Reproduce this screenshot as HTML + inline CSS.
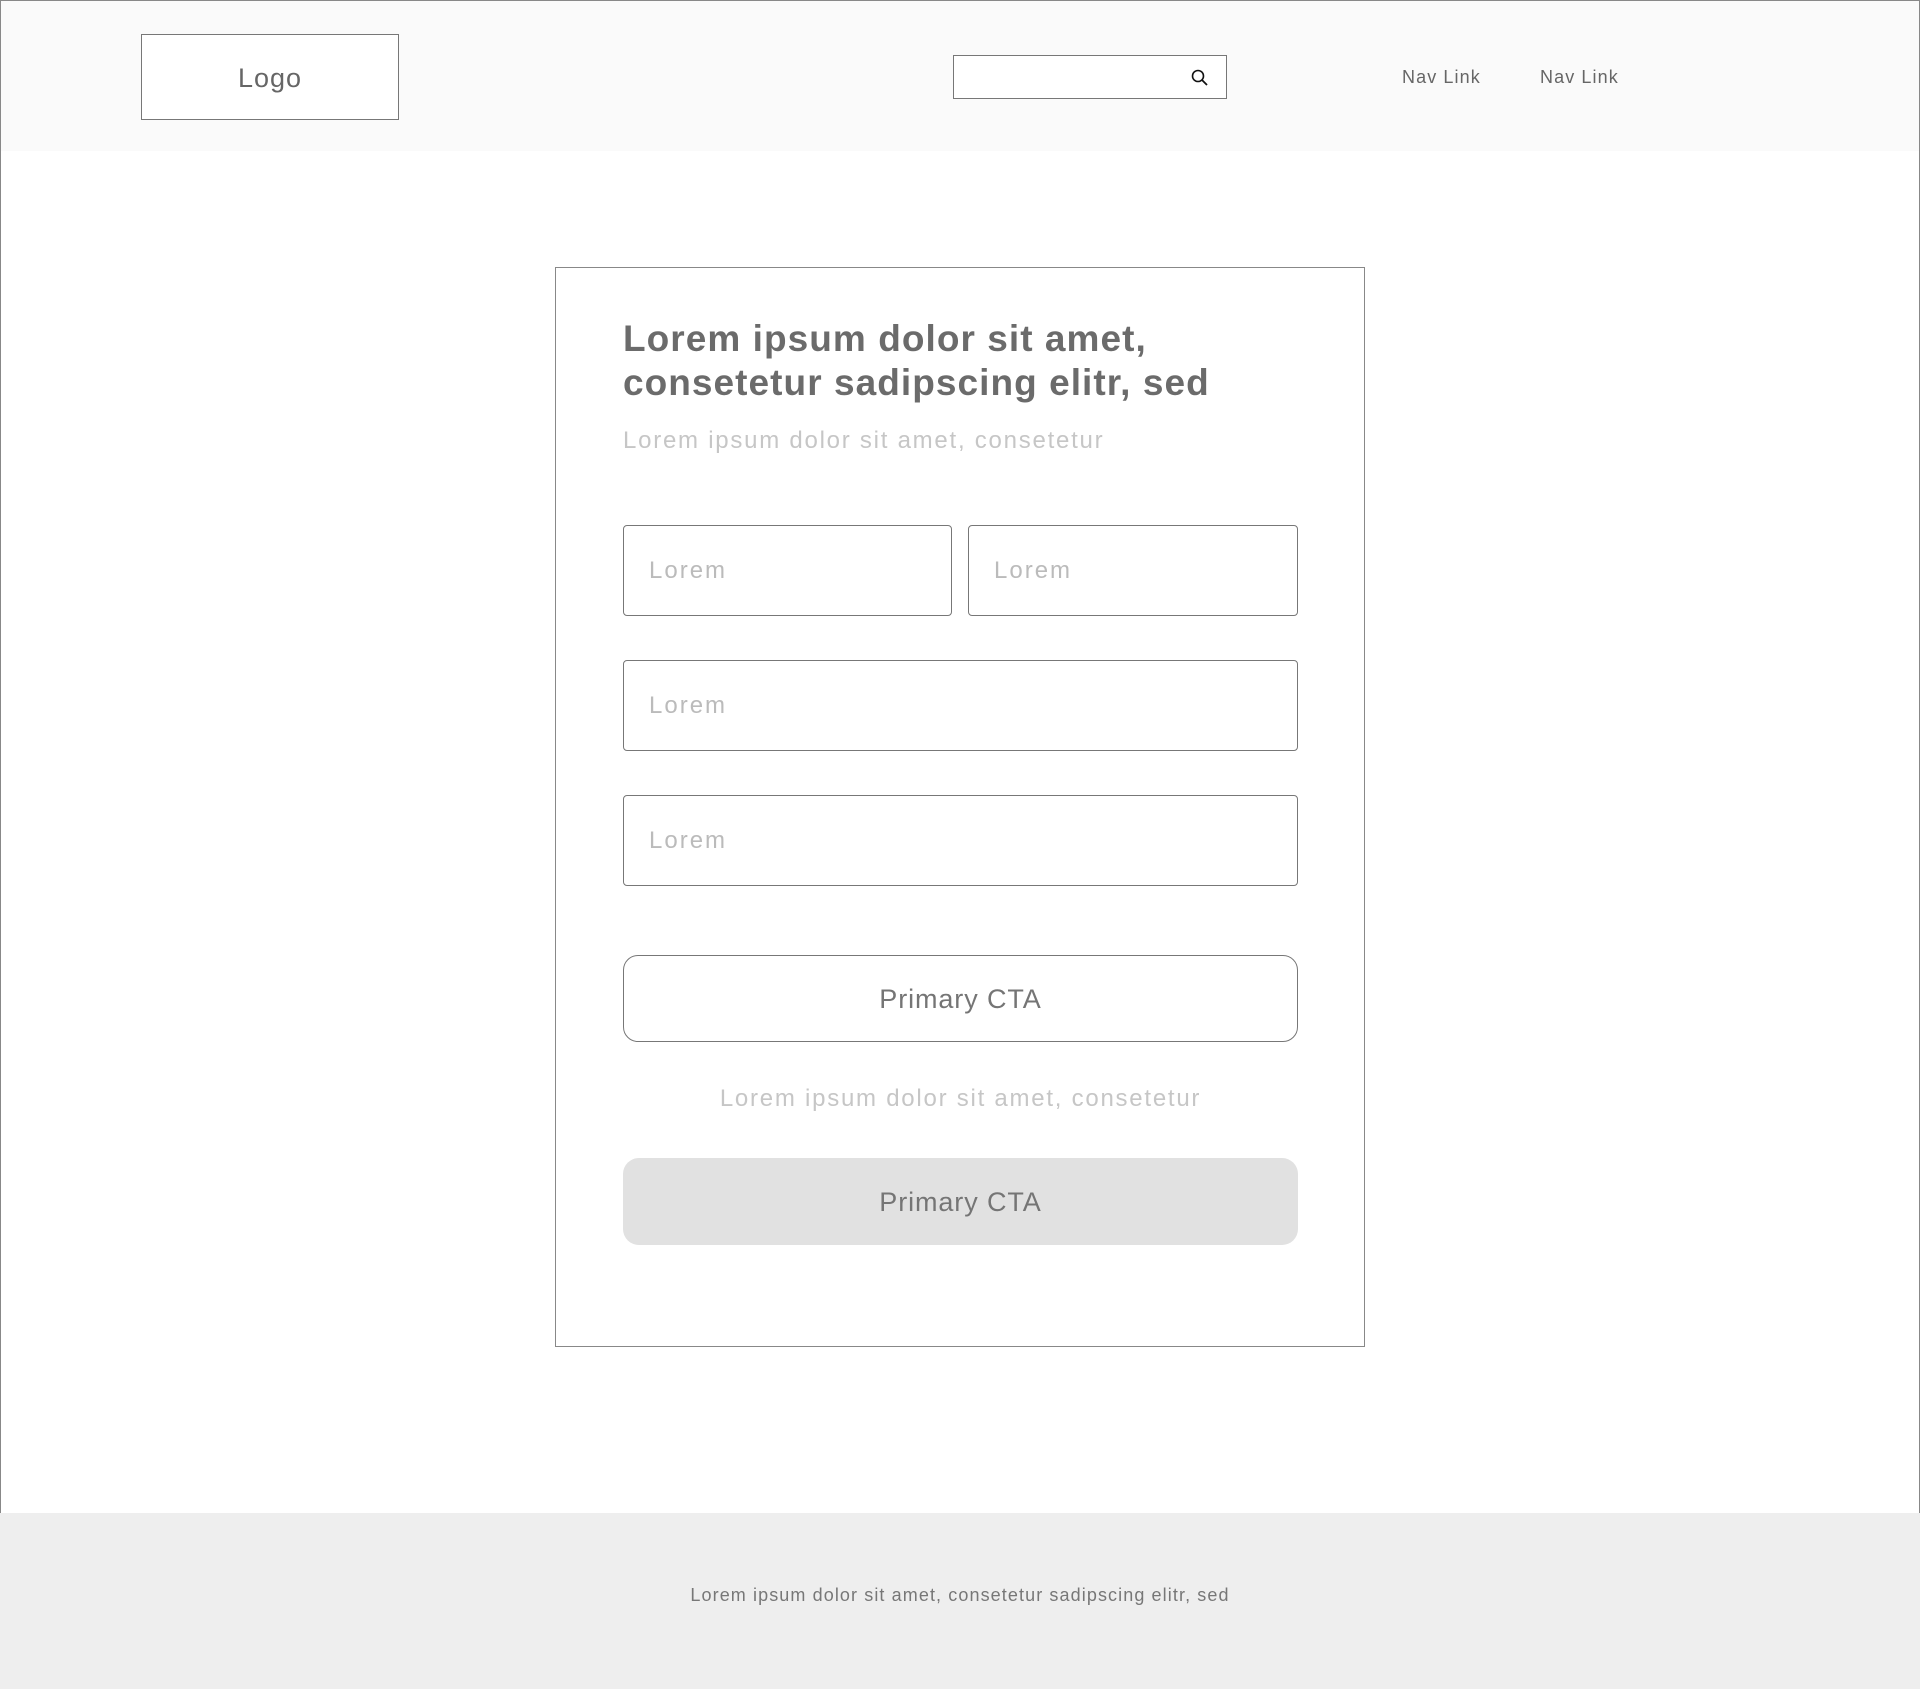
<!DOCTYPE html>
<html><head><meta charset="utf-8"><style>
*{box-sizing:border-box;margin:0;padding:0}
body{width:1920px;height:1689px;position:relative;background:#fff;font-family:"Liberation Sans",sans-serif;overflow:hidden}
.abs{position:absolute}
.frame{left:0;top:0;width:1920px;height:1513px;border:1px solid #888;border-bottom:none}
.header{left:1px;top:1px;width:1918px;height:150px;background:#fafafa}
.logo{left:141px;top:34px;width:258px;height:86px;border:1px solid #777;background:#fff;display:flex;align-items:center;justify-content:center;font-size:27px;color:#666;letter-spacing:1px;padding-top:2px}
.search{left:953px;top:55px;width:274px;height:44px;border:1px solid #777;background:#fff}
.nav{top:67px;font-size:18px;color:#666;letter-spacing:1.1px}
.card{left:555px;top:267px;width:810px;height:1080px;border:1px solid #888;background:#fff}
.h{left:623px;top:317px;font-size:37px;font-weight:bold;color:#6b6b6b;line-height:44px;letter-spacing:1.05px}
.sub{left:623px;top:427px;font-size:24px;color:#c6c6c6;letter-spacing:1.75px}
.in{border:1px solid #777;border-radius:4px;background:#fff;font-size:24px;color:#bbb;padding-left:25px;display:flex;align-items:center;letter-spacing:2px}
.btn{left:623px;width:675px;height:87px;border-radius:15px;display:flex;align-items:center;justify-content:center;font-size:27px;color:#757575;letter-spacing:.9px;padding-top:2px}
.footer{left:0;top:1513px;width:1920px;height:176px;background:#eee}
</style></head><body>
<div class="abs frame"></div>
<div class="abs header"></div>
<div class="abs logo">Logo</div>
<div class="abs search"><svg class="abs" style="left:236px;top:12px" width="20" height="20" viewBox="0 0 20 20"><circle cx="8" cy="8" r="5.5" fill="none" stroke="#111" stroke-width="1.6"/><line x1="12" y1="12" x2="17" y2="17" stroke="#111" stroke-width="1.8"/></svg></div>
<div class="abs nav" style="left:1402px">Nav Link</div>
<div class="abs nav" style="left:1540px">Nav Link</div>
<div class="abs card"></div>
<div class="abs h">Lorem ipsum dolor sit amet,<br>consetetur sadipscing elitr, sed</div>
<div class="abs sub">Lorem ipsum dolor sit amet, consetetur</div>
<div class="abs in" style="left:623px;top:525px;width:329px;height:91px">Lorem</div>
<div class="abs in" style="left:968px;top:525px;width:330px;height:91px">Lorem</div>
<div class="abs in" style="left:623px;top:660px;width:675px;height:91px">Lorem</div>
<div class="abs in" style="left:623px;top:795px;width:675px;height:91px">Lorem</div>
<div class="abs btn" style="top:955px;border:1px solid #777;background:#fff">Primary CTA</div>
<div class="abs" style="left:623px;width:675px;top:1085px;text-align:center;font-size:24px;color:#c6c6c6;letter-spacing:1.75px">Lorem ipsum dolor sit amet, consetetur</div>
<div class="abs btn" style="top:1158px;background:#e1e1e1;border-radius:16px">Primary CTA</div>
<div class="abs footer"></div>
<div class="abs" style="left:0;width:1920px;top:1585px;text-align:center;font-size:18px;color:#777;letter-spacing:1.1px">Lorem ipsum dolor sit amet, consetetur sadipscing elitr, sed</div>
</body></html>
